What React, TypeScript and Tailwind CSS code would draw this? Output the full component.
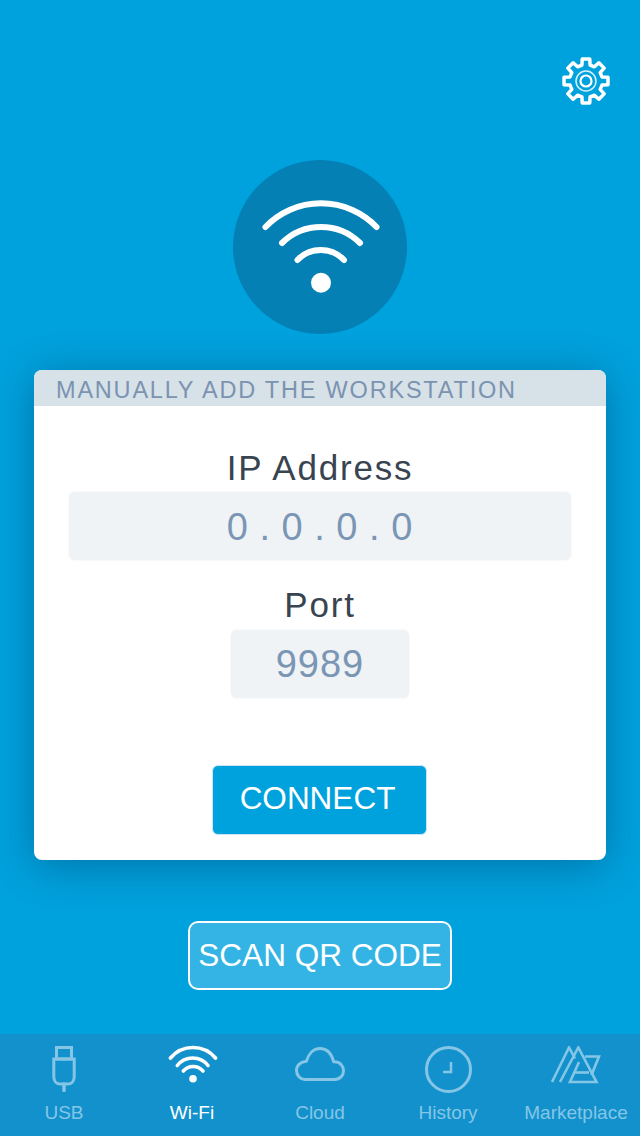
import React from 'react';

// outline of an 8 tooth gear, first tooth pointing up
const gearPath = (cx: number, cy: number, outer: number, inner: number) => {
  const pts: string[] = [];
  for (let i = 0; i < 8; i++) {
    const a = (i * Math.PI) / 4 - Math.PI / 2;
    const add = (r: number, d: number) =>
      pts.push(`${(cx + r * Math.cos(a + d)).toFixed(2)} ${(cy + r * Math.sin(a + d)).toFixed(2)}`);
    add(inner, -0.25);
    add(outer, -0.17);
    add(outer, 0.17);
    add(inner, 0.25);
  }
  return `M${pts.join('L')}Z`;
};

const TabIcon = ({ name }: { name: string }) => {
  if (name === 'USB') {
    return (
      <svg className="mt-[1px]" width="24" height="46" viewBox="0 0 24 46" fill="none" stroke="currentColor" strokeWidth="3">
        <path d="M4.500 1.500h15v11.500h-15z" />
        <path d="M1.800 13h20.400v18c0 4.500-3 7-6.500 7H8.300c-3.500 0-6.500-2.500-6.500-7z" />
        <path d="M12 38v6.500" strokeWidth="3.500" strokeLinecap="round" />
      </svg>
    );
  }
  if (name === 'Wi-Fi') {
    return (
      <svg className="ml-[2px]" width="50" height="38" viewBox="0 0 50 38" fill="none" stroke="currentColor" strokeWidth="3.600" strokeLinecap="round">
        <path d="M2.500 13A29.300 29.300 0 0 1 47.500 13" />
        <path d="M9.300 20.500A19.500 19.500 0 0 1 40 20.500" />
        <path d="M15.300 26A13 13 0 0 1 35 26" />
        <circle cx="25" cy="33.700" r="3.800" fill="currentColor" stroke="none" />
      </svg>
    );
  }
  if (name === 'Cloud') {
    return (
      <svg className="mt-[2px]" width="50" height="34" viewBox="0 0 50 34" fill="none" stroke="currentColor" strokeWidth="3" strokeLinejoin="round">
        <path d="M10 32.500h29.500c5.500 0 9-4 9-8.700s-3.500-9-9-9h-.8C36.500 6.500 31.500 1.500 25 1.500S13.500 6.500 11.500 14.200C5.500 14.500 1.500 18.500 1.500 23.500s4 9 8.500 9z" />
      </svg>
    );
  }
  if (name === 'History') {
    return (
      <svg className="mt-[1px]" width="47" height="47" viewBox="0 0 47 47" fill="none" stroke="currentColor" strokeWidth="3">
        <circle cx="23.500" cy="23.500" r="22" />
        <path d="M26 16v10h-8" strokeWidth="2.500" />
      </svg>
    );
  }
  return (
    <svg className="mt-[1px]" width="52" height="38" viewBox="0 0 52 38" fill="none" stroke="currentColor" strokeWidth="2.600">
      <path d="M2 36L19 1.500l6 11" />
      <path d="M10 36L28.300 1.500 46.500 36H20l9-20" />
      <path d="M24 26.500h15" />
      <path d="M35 10.500h14L41.500 29" />
    </svg>
  );
};

const tabs = ['USB', 'Wi-Fi', 'Cloud', 'History', 'Marketplace'];

const App: React.FC = () => {
  return (
    <div className="w-[640px] h-[1136px] flex flex-col overflow-hidden bg-[#00a2de] font-['Liberation_Sans',Arial,sans-serif]">
      {/* Settings */}
      <div className="flex justify-end pt-[56px] pr-[30px]">
        <svg width="48" height="50" viewBox="0 0 48 50" fill="none" stroke="white" strokeWidth="3.500" strokeLinejoin="round">
          <path d={gearPath(24, 25, 22.3, 16.5)} />
          <circle cx="24" cy="25" r="10" strokeWidth="1.500" opacity="0.85" />
          <circle cx="24" cy="25" r="5.500" strokeWidth="2.200" />
        </svg>
      </div>

      {/* Wi-Fi badge */}
      <div className="mt-[54px] self-center w-[174px] h-[174px] rounded-full bg-[#0580b5] flex items-center justify-center">
        <svg className="ml-[2px]" width="122" height="100" viewBox="0 0 122 100" fill="none" stroke="white" strokeWidth="6" strokeLinecap="round">
          <path d="M5.500 30A77 77 0 0 1 116.500 30" />
          <path d="M22 46A55.500 55.500 0 0 1 100 46" />
          <path d="M37.500 63A32 32 0 0 1 84 63" />
          <circle cx="61" cy="85.700" r="10" fill="white" stroke="none" />
        </svg>
      </div>

      {/* Manual entry card */}
      <div className="mt-[36px] mx-[34px] h-[490px] rounded-[8px] bg-white overflow-hidden shadow-[0_6px_44px_rgba(0,50,90,0.42)] flex flex-col items-center">
        <div className="w-full h-[36px] bg-[#d7e1e8] pl-[22px] text-[23.5px] leading-[41px] tracking-[1.8px] text-[#7b93b0] whitespace-nowrap">
          MANUALLY ADD THE WORKSTATION
        </div>
        <div className="mt-[43px] text-[35px] leading-[38px] tracking-[1.8px] text-[#38444f]">IP Address</div>
        <div className="mt-[5px] w-[502px] h-[68px] pt-[2px] rounded-[6px] bg-[#eff3f6] shadow-[0_0_2px_rgba(0,0,0,0.08)] flex items-center justify-center text-[38px] tracking-[1px] [word-spacing:-1px] text-[#7b96b5]">
          0 . 0 . 0 . 0
        </div>
        <div className="mt-[26px] text-[35px] leading-[38px] tracking-[1.8px] text-[#38444f]">Port</div>
        <div className="mt-[6px] w-[178px] h-[68px] rounded-[6px] bg-[#eff3f6] shadow-[0_0_2px_rgba(0,0,0,0.08)] flex items-center justify-center text-[38px] tracking-[1px] text-[#7b96b5]">
          9989
        </div>
        <button className="mt-[67px] w-[215px] h-[70px] pr-[3px] pb-[2px] rounded-[6px] border border-[#c9e6f6] bg-[#00a2de] text-white text-[31.5px] -translate-x-[1px]">
          CONNECT
        </button>
      </div>

      {/* Scan */}
      <button className="mt-[61px] self-center w-[264px] h-[69px] rounded-[10px] border-2 border-white bg-[#33b4e4] text-white text-[31.5px] whitespace-nowrap">
        SCAN QR CODE
      </button>

      {/* Tab bar */}
      <nav className="mt-auto h-[102px] bg-[#1291cc] flex">
        {tabs.map(t => (
          <div
            key={t}
            className={`flex-1 flex flex-col items-center pt-[11px] ${t === 'Wi-Fi' ? 'text-white' : 'text-[#85c6e6]'}`}
          >
            <div className="h-[48px] flex items-start justify-center">
              <TabIcon name={t} />
            </div>
            <div className="text-[19px] leading-[22px] mt-[9px] whitespace-nowrap">{t}</div>
          </div>
        ))}
      </nav>
    </div>
  );
};

export default App;
